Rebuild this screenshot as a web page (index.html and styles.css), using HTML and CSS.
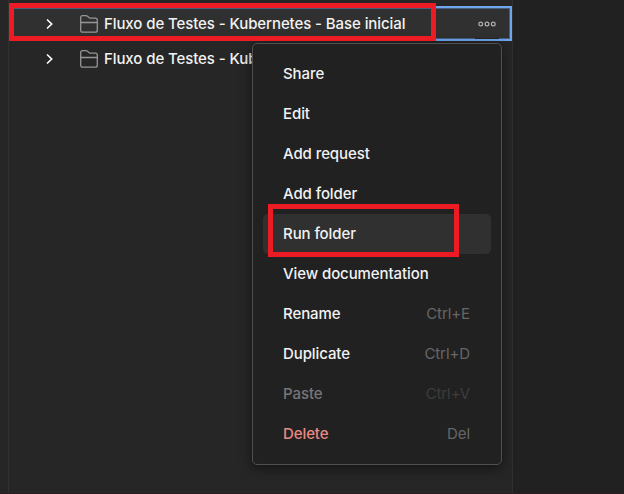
FILE: index.html
```
<!DOCTYPE html>
<html lang="en">
<head>
<meta charset="utf-8">
<title>Collections</title>
<link rel="stylesheet" href="styles.css">
</head>
<body>
<div class="app">
  <aside class="sidebar">
    <div class="row selected">
      <svg class="chevron" viewBox="0 0 10 12"><path d="M2 1.5 6.7 6 2 10.5"/></svg>
      <svg class="folder" viewBox="0 0 18 18"><path d="M.7 15.2V2.5Q.7.7 2.5.7H5.8Q6.8.7 7.5 1.3L9.7 3.2H15.3Q17.3 3.2 17.3 5.2V15.2Q17.3 17.2 15.3 17.2H2.7Q.7 17.2.7 15.2ZM.7 7.5H17.3"/></svg>
      <span class="name">Fluxo de Testes - Kubernetes - Base inicial</span>
      <span class="more"><svg viewBox="0 0 18 6"><circle cx="2.7" cy="3" r="1.9"/><circle cx="9" cy="3" r="1.9"/><circle cx="15.3" cy="3" r="1.9"/></svg></span>
    </div>
    <div class="row">
      <svg class="chevron" viewBox="0 0 10 12"><path d="M2 1.5 6.7 6 2 10.5"/></svg>
      <svg class="folder" viewBox="0 0 18 18"><path d="M.7 15.2V2.5Q.7.7 2.5.7H5.8Q6.8.7 7.5 1.3L9.7 3.2H15.3Q17.3 3.2 17.3 5.2V15.2Q17.3 17.2 15.3 17.2H2.7Q.7 17.2.7 15.2ZM.7 7.5H17.3"/></svg>
      <span class="name">Fluxo de Testes - Kub</span>
    </div>
  </aside>
  <div class="menu">
    <div class="item">Share</div>
    <div class="item">Edit</div>
    <div class="item">Add request</div>
    <div class="item">Add folder</div>
    <div class="item hover">Run folder</div>
    <div class="item">View documentation</div>
    <div class="item">Rename<kbd>Ctrl+E</kbd></div>
    <div class="item">Duplicate<kbd>Ctrl+D</kbd></div>
    <div class="item disabled">Paste<kbd>Ctrl+V</kbd></div>
    <div class="item danger">Delete<kbd>Del</kbd></div>
  </div>
  <div class="mark mark-row"></div>
  <div class="mark mark-run"></div>
</div>
</body>
</html>
```
FILE: styles.css
```
* { box-sizing: border-box; }

body {
  margin: 0;
  background: #212121;
  font: 500 15px/20px Inter, "Liberation Sans", sans-serif;
  letter-spacing: -0.09px;
  color: #f2f2f2;
}

.app {
  position: relative;
  height: 494px;
  padding-left: 8px;
  overflow: hidden;
  background: linear-gradient(90deg, #262626 8px, #212121 8px);
  border-bottom: 1px solid #2b1d20;
}

.sidebar {
  width: 505px;
  height: 100%;
  padding-top: 6px;
  background: #262626;
  border: solid #303030;
  border-width: 0 1px;
}

.row {
  display: flex;
  align-items: center;
  height: 35px;
  padding-left: 35.5px;
}

.selected {
  background: #303030;
  box-shadow: inset 0 0 0 2px #6ea5ed, inset 0 0 0 3px #465d7d;
}

.chevron {
  width: 10px;
  height: 12px;
  margin-right: 25.5px;
  fill: none;
  stroke: #fff;
  stroke-width: 1.6;
}

.folder {
  width: 18px;
  height: 18px;
  margin-right: 6px;
  fill: none;
  stroke: #969696;
  stroke-width: 1.3;
}

.name { white-space: nowrap; }

.more {
  display: flex;
  align-items: center;
  justify-content: center;
  align-self: flex-end;
  width: 24px;
  height: 30px;
  margin: 0 13px 2px auto;
  background: linear-gradient(#303030 29px, #262626 29px) no-repeat;
}

.more svg {
  width: 18px;
  height: 6px;
  fill: none;
  stroke: #b0b0b0;
  stroke-width: 1.2;
}

.menu {
  position: absolute;
  top: 43px;
  left: 252px;
  width: 250px;
  padding: 10px;
  background: #212121;
  border: 1px solid #505050;
  border-radius: 5px;
  box-shadow: 0 3px 12px rgba(0, 0, 0, .5);
}

.item {
  display: flex;
  align-items: center;
  justify-content: space-between;
  height: 40px;
  padding: 0 21px 0 20px;
  border-radius: 5px;
}

.hover { background: #303030; }

.item kbd {
  font: inherit;
  font-weight: 400;
  color: #666;
}

.disabled { color: #777; }
.disabled kbd { color: #3d3d3d; }
.danger { color: #e98a81; }

.mark {
  position: absolute;
  border: 5px solid #ed1c24;
}

.mark-row {
  top: 3px;
  left: 9px;
  width: 427px;
  height: 38px;
}

.mark-run {
  top: 204px;
  left: 268px;
  width: 191px;
  height: 53px;
}
```
